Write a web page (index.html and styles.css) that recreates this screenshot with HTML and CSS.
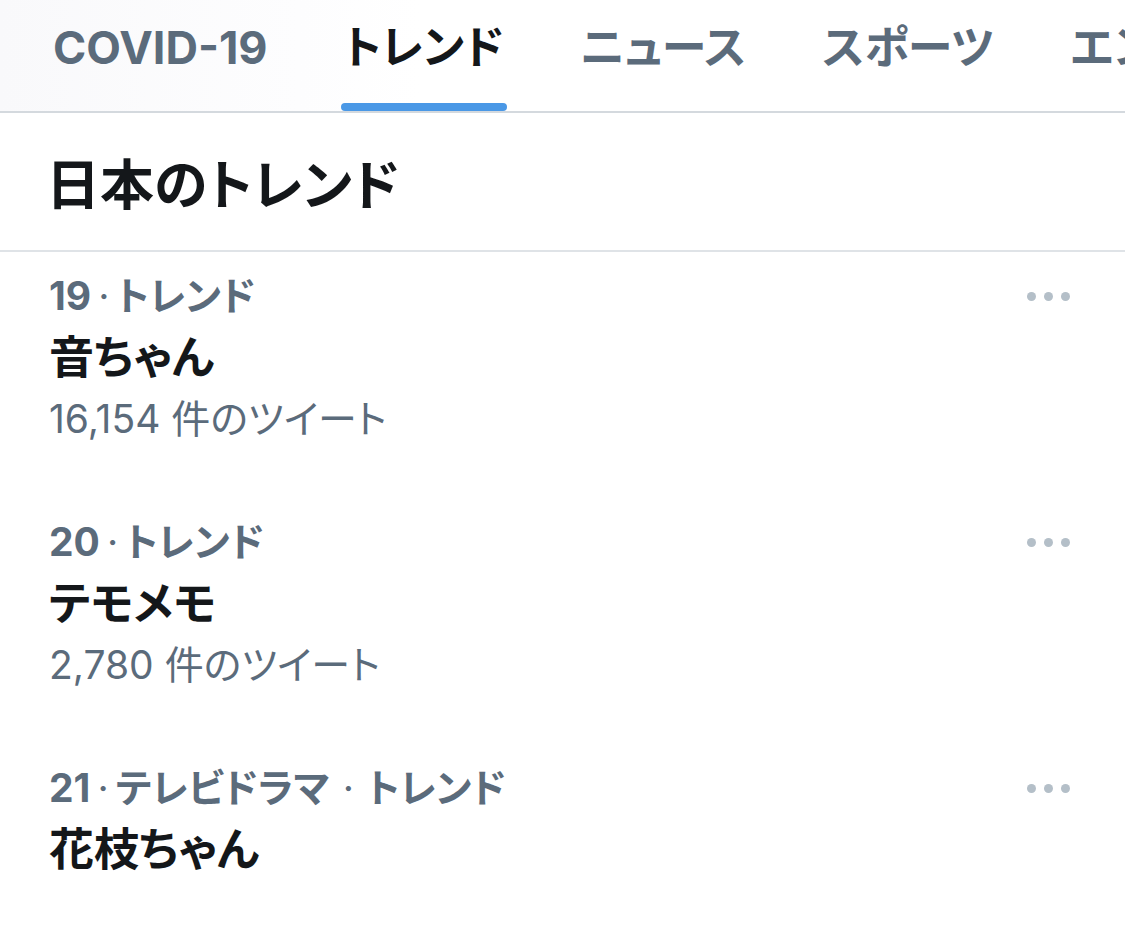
FILE: index.html
```html
<!DOCTYPE html>
<html lang="ja">
<head>
  <meta charset="UTF-8" />
  <meta name="viewport" content="width=device-width, initial-scale=1.0" />
  <title>トレンド</title>
  <link rel="stylesheet" href="styles.css">
</head>
<body>
  <nav class="tabs">
    <div class="tab"><span class="tab-label">COVID-19</span><span class="tab-bar"></span></div>
    <div class="tab active"><span class="tab-label">トレンド</span><span class="tab-bar"></span></div>
    <div class="tab"><span class="tab-label">ニュース</span><span class="tab-bar"></span></div>
    <div class="tab"><span class="tab-label">スポーツ</span><span class="tab-bar"></span></div>
    <div class="tab"><span class="tab-label">エンタメ</span><span class="tab-bar"></span></div>
  </nav>

  <h1 class="section-title">日本のトレンド</h1>

  <div class="trend">
    <div class="trend-meta">
      <span><span class="num">19</span><span class="dot">·</span>トレンド</span>
      <span class="more"><i></i><i></i><i></i></span>
    </div>
    <div class="trend-name">音ちゃん</div>
    <div class="trend-count"><span class="num">16,154</span> 件のツイート</div>
  </div>

  <div class="trend">
    <div class="trend-meta">
      <span><span class="num">20</span><span class="dot">·</span>トレンド</span>
      <span class="more"><i></i><i></i><i></i></span>
    </div>
    <div class="trend-name">テモメモ</div>
    <div class="trend-count"><span class="num">2,780</span> 件のツイート</div>
  </div>

  <div class="trend">
    <div class="trend-meta">
      <span><span class="num">21</span><span class="dot">·</span>テレビドラマ<span class="dot wide">·</span>トレンド</span>
      <span class="more"><i></i><i></i><i></i></span>
    </div>
    <div class="trend-name">花枝ちゃん</div>
  </div>
</body>
</html>
```

FILE: styles.css
```css
body {
  margin: 0;
  background: #fff;
  color: #14171a;
  font-family: 'Inter', 'Noto Sans CJK JP', sans-serif;
  font-feature-settings: "palt";
  overflow: hidden;
}
.tabs {
  display: flex;
  padding-left: 15px;
  height: 111px;
  border-bottom: 2px solid #d4d9de;
  white-space: nowrap;
  overflow: hidden;
  background: linear-gradient(90deg, #f9f9fb 0, #fdfdfe 300px, #fff 420px);
}
.tab {
  display: flex;
  flex-direction: column;
  align-items: center;
  padding: 0 38px;
  flex-shrink: 0;
}
.tab-label {
  padding-top: 20px;
  line-height: 56px;
  font-size: 45px;
  font-weight: 700;
  color: #5b6b7b;
}
.tab-bar {
  margin-top: auto;
  width: calc(100% + 6px);
  height: 8px;
  border-radius: 4px;
}
.tab.active .tab-label {
  color: #14171a;
}
.tab.active .tab-bar {
  background: #4a98e6;
}
.section-title {
  margin: 0;
  height: 137px;
  display: flex;
  align-items: center;
  padding: 0 46px;
  font-size: 54px;
  font-weight: 700;
  border-bottom: 2px solid #dfe3e7;
}
.trend {
  padding: 19px 55px 55px 49px;
}
.trend-meta {
  display: flex;
  justify-content: space-between;
  align-items: center;
  line-height: 50px;
  font-size: 39px;
  font-weight: 700;
  color: #5b6b7b;
}
.dot {
  margin: 0 7px;
  font-weight: 400;
}
.dot.wide {
  margin: 0 13px;
}
.more {
  display: flex;
  gap: 8px;
}
.more i {
  width: 9px;
  height: 9px;
  border-radius: 50%;
  background: #b4bfc8;
}
.trend-name {
  line-height: 74px;
  font-size: 45px;
  font-weight: 700;
}
.trend-count {
  line-height: 48px;
  font-size: 39px;
  color: #5b6b7b;
}
```
